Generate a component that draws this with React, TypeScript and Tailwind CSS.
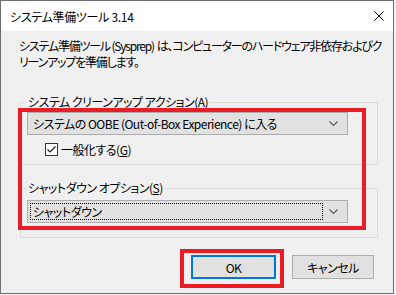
import React from "react";

const font = "[font-family:'Noto_Sans_CJK_JP','Noto_Sans',sans-serif] [font-feature-settings:'palt']";

function Chevron() {
  return (
    <svg width="9" height="5" viewBox="0 0 9 5" className="shrink-0">
      <path d="M0.5 0.5 L4.5 4.5 L8.5 0.5" fill="none" stroke="#5a5a5a" strokeWidth="1.1" />
    </svg>
  );
}

function Combo({ text, focused }: { text: string; focused?: boolean }) {
  return (
    <div className="w-[321px] h-[23px] bg-[#e1e1e1] border border-[#adadad] flex items-center pr-[4px]">
      <div className={`flex-1 h-[17px] ml-[2px] flex items-center pl-[2px] ${focused ? "border border-dotted border-black" : "border border-transparent"}`}>
        <span className="leading-[15px] whitespace-nowrap">{text}</span>
      </div>
      <div className="w-[20px] flex justify-center">
        <Chevron />
      </div>
    </div>
  );
}

function Group({ label, children, className }: { label: React.ReactNode; children: React.ReactNode; className?: string }) {
  return (
    <div className={`relative ml-[19px] w-[358px] border border-[#dcdcdc] ${className ?? ""}`}>
      <span className="absolute left-[6px] top-[-9px] bg-[#f0f0f0] px-[1px] leading-[15px] whitespace-nowrap">{label}</span>
      {children}
    </div>
  );
}

export default function App() {
  return (
    <div className={`relative w-[396px] h-[295px] bg-[#f4f4f4] text-[12px] text-black tracking-[-0.5px] ${font}`}>
      <div className="w-[394px] h-[294px] border border-[#6f6f6f] bg-[#f0f0f0] flex flex-col">
        {/* title bar */}
        <div className="h-[30px] bg-white flex items-center pl-[9px] pr-[9px] shrink-0">
          <span className="flex-1 leading-[15px] tracking-[-0.3px]">システム準備ツール 3.14</span>
          <svg width="10" height="10" viewBox="0 0 10 10">
            <path d="M0.5 0.5 L9.5 9.5 M9.5 0.5 L0.5 9.5" stroke="#000" strokeWidth="1" />
          </svg>
        </div>

        <p className="pt-[7px] pl-[18px] leading-[15.5px] whitespace-nowrap tracking-[-1.2px]">
          システム準備ツール (Sysprep)&nbsp; は、コンピューターのハードウェア非依存およびク
          <br />
          リーンアップを準備します。
        </p>

        <Group label="システム クリーンアップ アクション(A)" className="mt-[33px] h-[63px] pt-[9px] pl-[6px]">
          <Combo text="システムの OOBE (Out-of-Box Experience) に入る" />
          <label className="flex items-center mt-[7px] ml-[18px] gap-[3px]">
            <span className="w-[13px] h-[13px] border border-[#333] bg-white flex items-center justify-center">
              <svg width="11" height="11" viewBox="0 0 11 11">
                <path d="M1.5 5.5 L4 8 L9.5 2.5" fill="none" stroke="#222" strokeWidth="1.2" />
              </svg>
            </span>
            <span className="leading-[15px]">
              一般化する(<span className="underline">G</span>)
            </span>
          </label>
        </Group>

        <Group
          label={
            <>
              シャットダウン オプション(<span className="underline">S</span>)
            </>
          }
          className="mt-[23px] h-[50px] pt-[11px] pl-[6px]"
        >
          <Combo text="シャットダウン" focused />
        </Group>

        <div className="flex justify-end gap-[16px] pr-[19px] mt-[17px]">
          <button className="w-[85px] h-[24px] bg-[#e1e1e1] border-2 border-[#0078d7] leading-[15px]">OK</button>
          <button className="w-[82px] h-[24px] bg-[#e1e1e1] border border-[#adadad] leading-[15px]">キャンセル</button>
        </div>
      </div>

      {/* red annotation boxes */}
      <div className="absolute left-[18px] top-[108px] w-[348px] h-[122px] border-[4px] border-[#ec1c24] pointer-events-none" />
      <div className="absolute left-[180px] top-[249px] w-[104px] h-[39px] border-[4px] border-[#ec1c24] pointer-events-none" />
    </div>
  );
}
